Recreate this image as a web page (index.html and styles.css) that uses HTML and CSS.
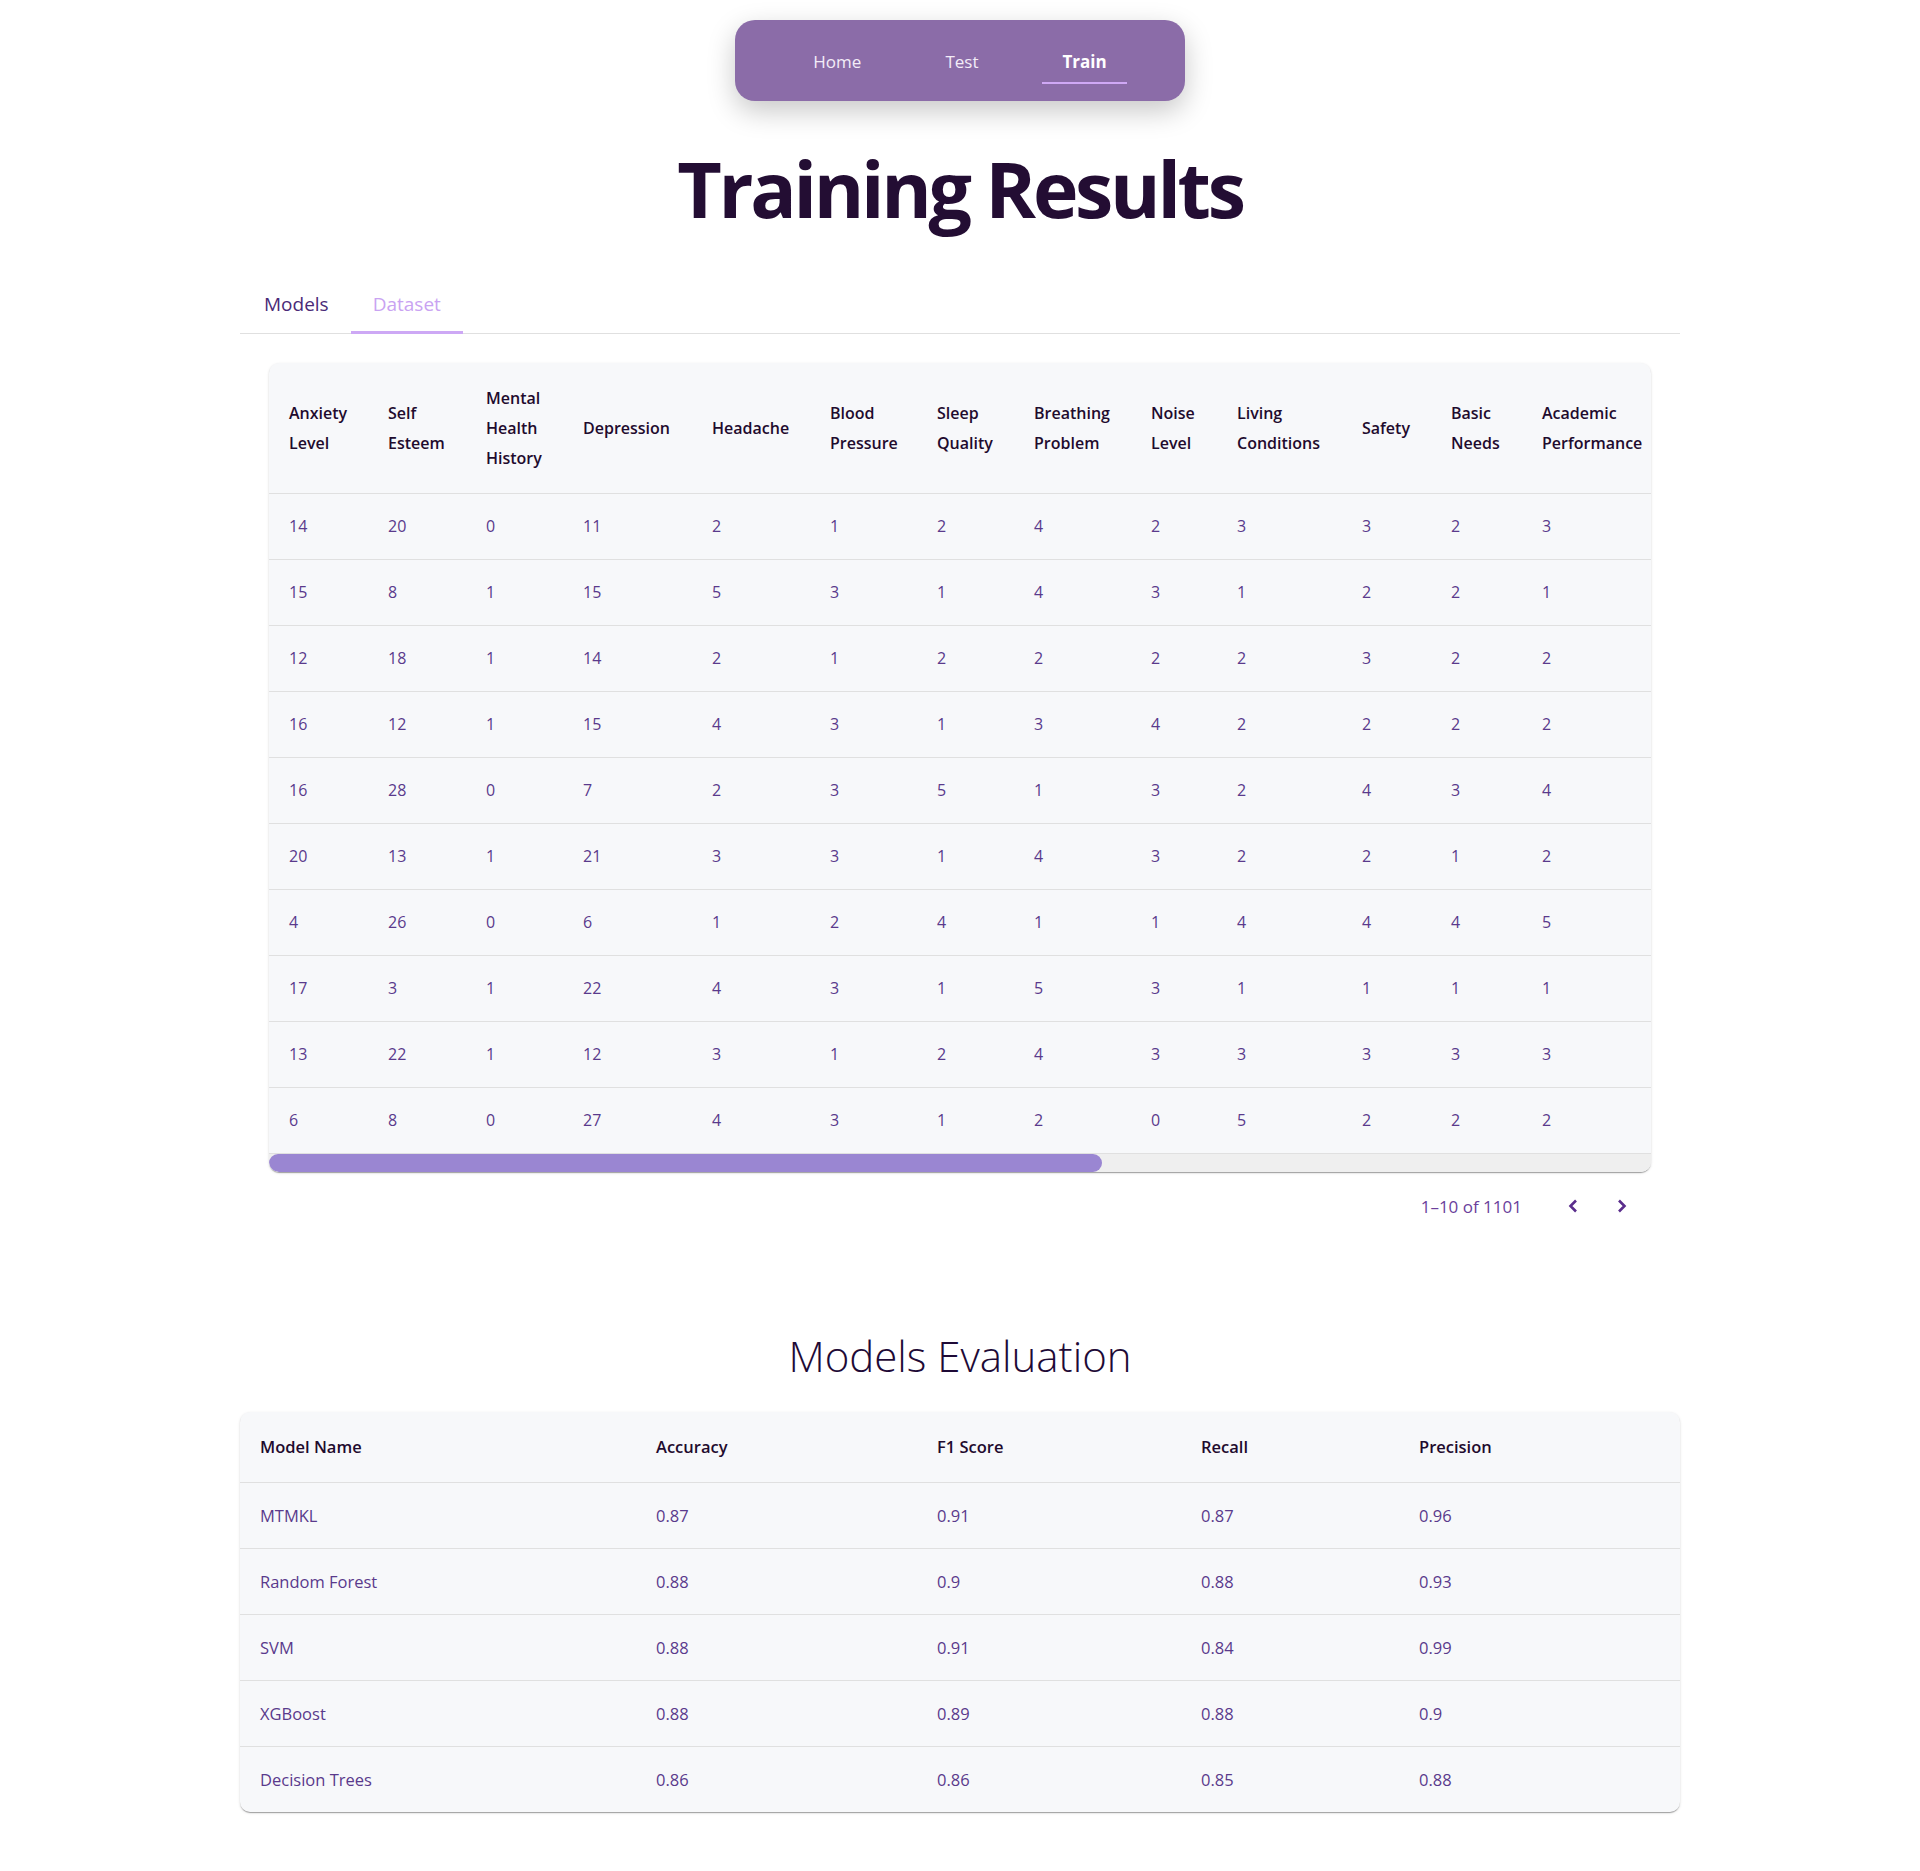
FILE: index.html
```html
<!DOCTYPE html>
<html lang="en">
<head>
<meta charset="utf-8">
<title>Training Results</title>
<link rel="stylesheet" href="styles.css">
</head>
<body>
<header class="nav-wrap">
  <nav class="nav">
    <a class="nav-link">Home</a>
    <a class="nav-link">Test</a>
    <a class="nav-link active">Train</a>
  </nav>
</header>

<main class="page">
  <h1 class="title">Training Results</h1>

  <div class="tabs">
    <div class="tab">Models</div>
    <div class="tab selected">Dataset</div>
  </div>

  <section class="panel">
    <div class="card data-card">
      <table class="data">
        <colgroup>
          <col class="w99"><col class="w98"><col class="w97"><col class="w129"><col class="w118"><col class="w107"><col class="w97"><col class="w117"><col class="w86"><col class="w125"><col class="w89"><col class="w91"><col>
        </colgroup>
        <thead>
          <tr>
            <th>Anxiety<br>Level</th><th>Self<br>Esteem</th><th>Mental<br>Health<br>History</th><th>Depression</th><th>Headache</th><th>Blood<br>Pressure</th><th>Sleep<br>Quality</th><th>Breathing<br>Problem</th><th>Noise<br>Level</th><th>Living<br>Conditions</th><th>Safety</th><th>Basic<br>Needs</th><th>Academic<br>Performance</th>
          </tr>
        </thead>
        <tbody>
          <tr><td>14</td><td>20</td><td>0</td><td>11</td><td>2</td><td>1</td><td>2</td><td>4</td><td>2</td><td>3</td><td>3</td><td>2</td><td>3</td></tr>
          <tr><td>15</td><td>8</td><td>1</td><td>15</td><td>5</td><td>3</td><td>1</td><td>4</td><td>3</td><td>1</td><td>2</td><td>2</td><td>1</td></tr>
          <tr><td>12</td><td>18</td><td>1</td><td>14</td><td>2</td><td>1</td><td>2</td><td>2</td><td>2</td><td>2</td><td>3</td><td>2</td><td>2</td></tr>
          <tr><td>16</td><td>12</td><td>1</td><td>15</td><td>4</td><td>3</td><td>1</td><td>3</td><td>4</td><td>2</td><td>2</td><td>2</td><td>2</td></tr>
          <tr><td>16</td><td>28</td><td>0</td><td>7</td><td>2</td><td>3</td><td>5</td><td>1</td><td>3</td><td>2</td><td>4</td><td>3</td><td>4</td></tr>
          <tr><td>20</td><td>13</td><td>1</td><td>21</td><td>3</td><td>3</td><td>1</td><td>4</td><td>3</td><td>2</td><td>2</td><td>1</td><td>2</td></tr>
          <tr><td>4</td><td>26</td><td>0</td><td>6</td><td>1</td><td>2</td><td>4</td><td>1</td><td>1</td><td>4</td><td>4</td><td>4</td><td>5</td></tr>
          <tr><td>17</td><td>3</td><td>1</td><td>22</td><td>4</td><td>3</td><td>1</td><td>5</td><td>3</td><td>1</td><td>1</td><td>1</td><td>1</td></tr>
          <tr><td>13</td><td>22</td><td>1</td><td>12</td><td>3</td><td>1</td><td>2</td><td>4</td><td>3</td><td>3</td><td>3</td><td>3</td><td>3</td></tr>
          <tr><td>6</td><td>8</td><td>0</td><td>27</td><td>4</td><td>3</td><td>1</td><td>2</td><td>0</td><td>5</td><td>2</td><td>2</td><td>2</td></tr>
        </tbody>
      </table>
      <div class="scrollbar" aria-hidden="true"><div class="thumb"></div></div>
    </div>

    <div class="pager">
      <span class="pager-text">1–10 of 1101</span>
      <button class="pager-btn" aria-label="Previous page">
        <svg viewBox="0 0 24 24" width="24" height="24"><polyline points="15,6.5 9.5,12 15,17.5"/></svg>
      </button>
      <button class="pager-btn" aria-label="Next page">
        <svg viewBox="0 0 24 24" width="24" height="24"><polyline points="9,6.5 14.5,12 9,17.5"/></svg>
      </button>
    </div>
  </section>

  <h2 class="subtitle">Models Evaluation</h2>

  <div class="card eval-card">
    <table class="eval">
      <colgroup>
        <col class="e1"><col class="e2"><col class="e3"><col class="e4"><col class="e5">
      </colgroup>
      <thead>
        <tr><th>Model Name</th><th>Accuracy</th><th>F1 Score</th><th>Recall</th><th>Precision</th></tr>
      </thead>
      <tbody>
        <tr><td>MTMKL</td><td>0.87</td><td>0.91</td><td>0.87</td><td>0.96</td></tr>
        <tr><td>Random Forest</td><td>0.88</td><td>0.9</td><td>0.88</td><td>0.93</td></tr>
        <tr><td>SVM</td><td>0.88</td><td>0.91</td><td>0.84</td><td>0.99</td></tr>
        <tr><td>XGBoost</td><td>0.88</td><td>0.89</td><td>0.88</td><td>0.9</td></tr>
        <tr><td>Decision Trees</td><td>0.86</td><td>0.86</td><td>0.85</td><td>0.88</td></tr>
      </tbody>
    </table>
  </div>
</main>
</body>
</html>
```

FILE: styles.css
```css
* { box-sizing: border-box; }

body {
  margin: 0;
  background: #ffffff;
  font-family: "Open Sans", "Noto Sans", sans-serif;
  color: #1f0b2e;
}

/* ---------- nav ---------- */
.nav-wrap {
  display: flex;
  justify-content: center;
  padding-top: 20px;
}
.nav {
  width: 450px;
  height: 81px;
  background: #8b6ca8;
  border-radius: 20px;
  box-shadow: 0 10px 28px rgba(0, 0, 0, 0.22);
  display: flex;
  justify-content: center;
  align-items: flex-start;
  gap: 44px;
}
.nav-link {
  display: block;
  padding: 30px 20px 8px;
  line-height: 24px;
  font-size: 17px;
  color: #f3ecf8;
  border-bottom: 2px solid transparent;
}
.nav-link.active {
  font-weight: 700;
  color: #ffffff;
  border-bottom-color: #cfa8f5;
}

/* ---------- page ---------- */
.page {
  width: 1440px;
  margin: 0 auto;
  padding-bottom: 60px;
}
.title {
  margin: 40px 0 0;
  text-align: center;
  font-size: 77px;
  line-height: 96px;
  font-weight: 700;
  letter-spacing: -3.3px;
  color: #230d33;
}

/* ---------- tabs ---------- */
.tabs {
  margin-top: 40px;
  display: flex;
  padding-left: 2px;
  border-bottom: 1px solid #e0e0e0;
}
.tab {
  padding: 14px 22px 14px;
  line-height: 26px;
  font-size: 19px;
  font-weight: 500;
  color: #4a2a78;
  border-bottom: 3px solid transparent;
  margin-bottom: -1px;
}
.tab.selected {
  color: #c9a3f2;
  border-bottom-color: #cda8f5;
}

.panel {
  padding: 29px 29px 0;
}

/* ---------- card / tables ---------- */
.card {
  background: #f7f8fa;
  border-radius: 10px;
  overflow: hidden;
  box-shadow: 0 2px 1px -1px rgba(0, 0, 0, 0.2), 0 1px 1px 0 rgba(0, 0, 0, 0.14), 0 1px 3px 0 rgba(0, 0, 0, 0.12);
}

.scrollbar {
  height: 18px;
  background: #efefef;
}
.thumb {
  width: 60.3%;
  height: 100%;
  background: #9a86d2;
  border-radius: 9px;
}

table {
  width: 100%;
  border-collapse: collapse;
  table-layout: fixed;
}

th, td {
  text-align: left;
  padding: 18px 20px;
  line-height: 29px;
  border-bottom: 1px solid #e0e0e0;
  vertical-align: middle;
  white-space: nowrap;
}
th {
  font-size: 16px;
  font-weight: 600;
  color: #1f0b2e;
  padding-top: 20px;
  padding-bottom: 20px;
  line-height: 30px;
}
td {
  font-size: 16px;
  font-weight: 400;
  color: #5a3a8c;
}
.data th:last-child, .data td:last-child { padding-right: 0; }
.eval th, .eval td { font-size: 16.5px; }
.eval tbody tr:last-child td { border-bottom: none; }

.w86 { width: 86px; } .w89 { width: 89px; } .w91 { width: 91px; }
.w97 { width: 97px; } .w98 { width: 98px; } .w99 { width: 99px; }
.w107 { width: 107px; } .w117 { width: 117px; } .w118 { width: 118px; }
.w125 { width: 125px; } .w129 { width: 129px; }

.e1 { width: 396px; } .e2 { width: 281px; } .e3 { width: 264px; } .e4 { width: 218px; } .e5 { width: 281px; }

/* ---------- pager ---------- */
.pager {
  display: flex;
  justify-content: flex-end;
  align-items: center;
  height: 64px;
  margin-top: 2px;
  padding-right: 9px;
}
.pager-text {
  font-size: 17px;
  color: #6b3f9c;
  margin-right: 31px;
}
.pager-btn {
  width: 40px;
  height: 40px;
  padding: 8px;
  border: none;
  background: none;
  display: flex;
  align-items: center;
  justify-content: center;
  margin-left: 9px;
}
.pager-btn:first-of-type { margin-left: 0; }
.pager-btn svg {
  display: block;
  fill: none;
  stroke: #5a2d8c;
  stroke-width: 2.6;
}

/* ---------- evaluation ---------- */
.subtitle {
  margin: 90px 0 28px;
  text-align: center;
  font-size: 42px;
  line-height: 56px;
  font-weight: 300;
  color: #1e0a36;
}
```
